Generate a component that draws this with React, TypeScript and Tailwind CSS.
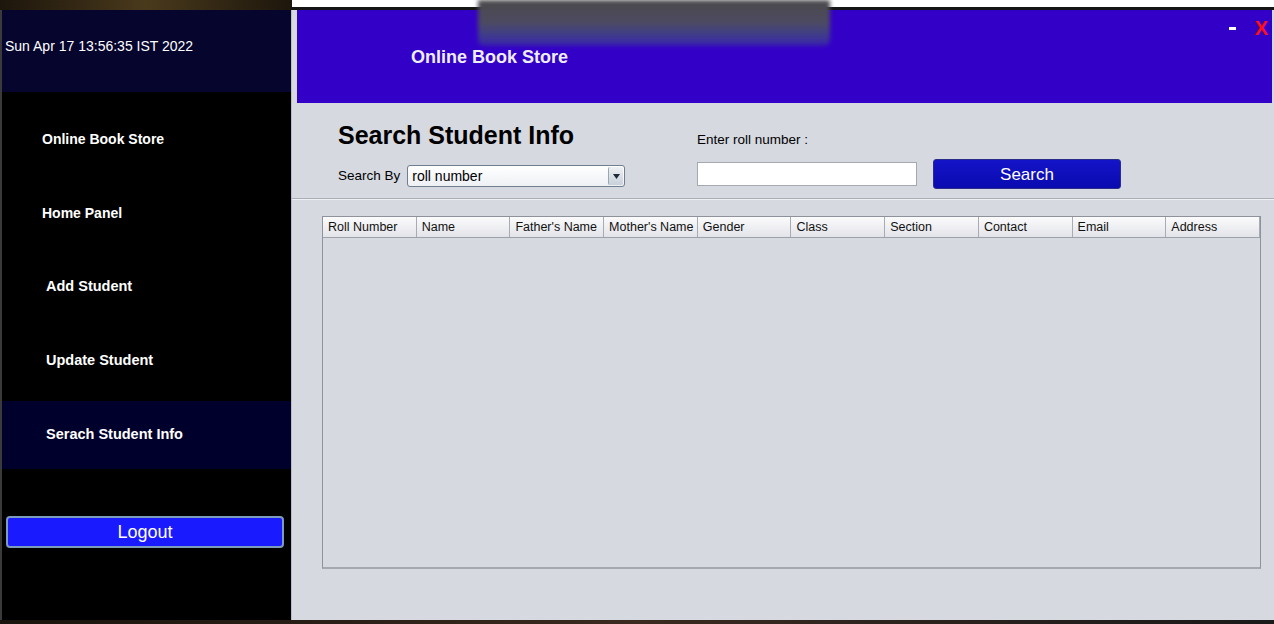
import React from "react";

const menu = [
  { label: "Online Book Store", indent: "pl-[40px] text-[14px]" },
  { label: "Home Panel", indent: "pl-[40px] text-[14px]" },
  { label: "Add Student", indent: "pl-[44px] text-[14.5px]" },
  { label: "Update Student", indent: "pl-[44px] text-[14.5px]" },
  { label: "Serach Student Info", indent: "pl-[44px] text-[14.5px]", active: true },
];

const columns = ["Roll Number", "Name", "Father's Name", "Mother's Name", "Gender", "Class", "Section", "Contact", "Email", "Address"];

const font = { fontFamily: '"Liberation Sans", Arial, sans-serif' };

export default function App() {
  return (
    <div className="w-[1274px] h-[624px] overflow-hidden relative flex flex-col bg-white" style={font}>
      {/* desktop strip on top */}
      <div className="h-[10px] flex shrink-0">
        <div className="w-[292px] bg-gradient-to-r from-[#1d160c] via-[#4a3a1c] to-[#1d160c]" />
        <div className="flex-1 flex flex-col">
          <div className="h-[7px] bg-white" />
          <div className="h-[3px] bg-[#151515]" />
        </div>
      </div>

      <div className="flex flex-1 bg-[#3a3a3a]">
        {/* sidebar */}
        <aside className="ml-[2px] w-[289px] bg-black flex flex-col">
          <div className="h-[82px] bg-[#05052d] flex items-center pl-[3px] pb-[10px]">
            <span className="text-white text-[14px]">Sun Apr 17 13:56:35 IST 2022</span>
          </div>
          <nav className="pt-[13px] flex flex-col gap-[6px]">
            {menu.map((m) => (
              <div key={m.label} className={`h-[68px] flex items-center ${m.indent} ${m.active ? "bg-[#00002d]" : ""}`}>
                <span className="text-white font-bold">{m.label}</span>
              </div>
            ))}
          </nav>
          <div className="pl-[4px] pr-[7px] mt-[47px]">
            <button className="w-full h-[32px] rounded-[4px] border-2 border-[#7d9bbd] bg-[#1a1aff] text-white text-[18px] leading-none">Logout</button>
          </div>
        </aside>

        {/* main panel */}
        <main className="flex-1 bg-[#d6d9e0] border-l border-[#b9bcc4] flex flex-col">
          <header className="ml-[5px] mr-[2px] h-[93px] bg-[#3300c8] flex items-start">
            <h1 className="pl-[114px] pt-[36px] text-[#eeeef6] font-bold text-[18px] leading-[22px]">Online Book Store</h1>
            <div className="ml-auto flex items-center gap-[19px] pt-[6px] pr-[4px]">
              <span className="w-[7px] h-[3px] bg-white mt-[1px]" />
              <span className="text-[#ff1010] font-bold text-[20px] leading-[24px]">X</span>
            </div>
          </header>

          <section className="h-[96px] flex pl-[46px] border-b border-[#aaaeb6] shadow-[0_1px_0_#eef0f4]">
            <div className="w-[359px] pt-[17px]">
              <h2 className="text-black font-bold text-[25px] leading-[31px]">Search Student Info</h2>
              <div className="flex items-center gap-[7px] mt-[14px]">
                <span className="text-[13.5px] text-black">Search By</span>
                <div className="w-[218px] h-[22px] rounded-[3px] border border-[#6f7f90] bg-gradient-to-b from-white to-[#eef0f4] flex items-center">
                  <span className="flex-1 pl-[4px] text-[14px] leading-none text-black">roll number</span>
                  <span className="w-[15px] h-[18px] mr-[1px] rounded-[2px] bg-gradient-to-b from-[#eef1f5] to-[#c9d0da] border-l border-[#9aa6b4] flex items-center justify-center">
                    <svg width="7" height="5" viewBox="0 0 7 5"><path d="M0 0h7L3.5 5z" fill="#1d2a3a" /></svg>
                  </span>
                </div>
              </div>
            </div>
            <div className="pt-[28px]">
              <div className="text-[13.5px] leading-[18px] text-black">Enter roll number :</div>
              <div className="flex items-center gap-[16px] mt-[10px]">
                <input className="w-[220px] h-[24px] bg-white border border-[#a4a8b0] outline-none" />
                <button className="w-[188px] h-[30px] rounded-[3px] bg-gradient-to-b from-[#1414c8] to-[#0a0ab0] border border-[#2b2b8a] text-white text-[17px] leading-none">Search</button>
              </div>
            </div>
          </section>

          <div className="ml-[30px] mr-[13px] mt-[17px] h-[353px] border border-[#8e929a] border-b-2 border-b-[#a5a8b0] flex flex-col">
            <div className="grid grid-cols-10 h-[21px] border-b border-[#9da1a9] bg-gradient-to-b from-[#fbfbfc] to-[#e3e4e9]">
              {columns.map((c) => (
                <div key={c} className="border-r border-[#a8abb3] pl-[5px] pt-[1px] flex items-center text-[12.5px] text-[#111] whitespace-nowrap overflow-hidden">{c}</div>
              ))}
            </div>
          </div>
        </main>
      </div>

      <div className="h-[4px] shrink-0 bg-gradient-to-r from-[#1a140e] via-[#3a2a20] to-[#1a1a1a]" />

      {/* redacted area over the title bar */}
      <div className="absolute left-[478px] top-0 w-[352px] h-[46px] rounded-b-[6px] bg-gradient-to-b from-[#4a4a4a] via-[#4d4a62] to-[#3a1cae] blur-[2px]" />
    </div>
  );
}
